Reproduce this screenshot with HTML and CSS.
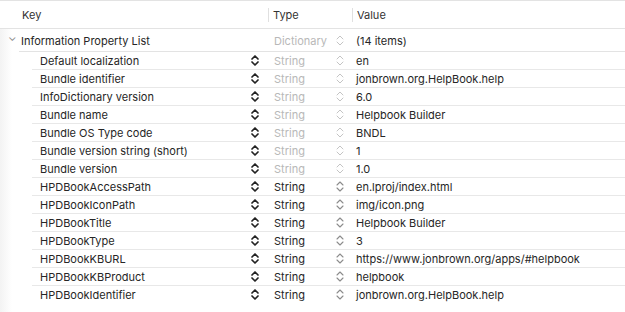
FILE: index.html
```html
<!DOCTYPE html>
<html lang="en">
  <head>
    <meta charset="UTF-8"/>
    <title>Info.plist</title>
    <link rel="stylesheet" href="styles.css">
  </head>
  <body>
    <svg width="0" height="0" class="defs">
      <symbol id="step" viewBox="0 0 8 11">
        <path d="M1 4 L4 1 L7 4 M1 7 L4 10 L7 7" fill="none" stroke-linecap="round" stroke-linejoin="round"/>
      </symbol>
    </svg>

    <div class="plist">
      <div class="head">
        <div class="col key">Key</div>
        <div class="col type"><span class="sep"></span>Type</div>
        <div class="col value"><span class="sep"></span>Value</div>
      </div>

      <div class="root">
        <div class="col key"><span class="twisty">&#x2304;</span>Information Property List</div>
        <div class="col type dim">Dictionary<svg class="st light"><use href="#step"/></svg></div>
        <div class="col value">(14 items)</div>
      </div>

      <div class="rows">
        <div class="row">
          <div class="col key">Default localization<svg class="st dark"><use href="#step"/></svg></div>
          <div class="col type dim">String<svg class="st light"><use href="#step"/></svg></div>
          <div class="col value">en</div>
        </div>
        <div class="row">
          <div class="col key">Bundle identifier<svg class="st dark"><use href="#step"/></svg></div>
          <div class="col type dim">String<svg class="st light"><use href="#step"/></svg></div>
          <div class="col value">jonbrown.org.HelpBook.help</div>
        </div>
        <div class="row">
          <div class="col key">InfoDictionary version<svg class="st dark"><use href="#step"/></svg></div>
          <div class="col type dim">String<svg class="st light"><use href="#step"/></svg></div>
          <div class="col value">6.0</div>
        </div>
        <div class="row">
          <div class="col key">Bundle name<svg class="st dark"><use href="#step"/></svg></div>
          <div class="col type dim">String<svg class="st light"><use href="#step"/></svg></div>
          <div class="col value">Helpbook Builder</div>
        </div>
        <div class="row">
          <div class="col key">Bundle OS Type code<svg class="st dark"><use href="#step"/></svg></div>
          <div class="col type dim">String<svg class="st light"><use href="#step"/></svg></div>
          <div class="col value">BNDL</div>
        </div>
        <div class="row">
          <div class="col key">Bundle version string (short)<svg class="st dark"><use href="#step"/></svg></div>
          <div class="col type dim">String<svg class="st light"><use href="#step"/></svg></div>
          <div class="col value">1</div>
        </div>
        <div class="row">
          <div class="col key">Bundle version<svg class="st dark"><use href="#step"/></svg></div>
          <div class="col type dim">String<svg class="st light"><use href="#step"/></svg></div>
          <div class="col value">1.0</div>
        </div>
        <div class="row">
          <div class="col key">HPDBookAccessPath<svg class="st dark"><use href="#step"/></svg></div>
          <div class="col type">String<svg class="st mid"><use href="#step"/></svg></div>
          <div class="col value">en.lproj/index.html</div>
        </div>
        <div class="row">
          <div class="col key">HPDBookIconPath<svg class="st dark"><use href="#step"/></svg></div>
          <div class="col type">String<svg class="st mid"><use href="#step"/></svg></div>
          <div class="col value">img/icon.png</div>
        </div>
        <div class="row">
          <div class="col key">HPDBookTitle<svg class="st dark"><use href="#step"/></svg></div>
          <div class="col type">String<svg class="st mid"><use href="#step"/></svg></div>
          <div class="col value">Helpbook Builder</div>
        </div>
        <div class="row">
          <div class="col key">HPDBookType<svg class="st dark"><use href="#step"/></svg></div>
          <div class="col type">String<svg class="st mid"><use href="#step"/></svg></div>
          <div class="col value">3</div>
        </div>
        <div class="row">
          <div class="col key">HPDBookKBURL<svg class="st dark"><use href="#step"/></svg></div>
          <div class="col type">String<svg class="st mid"><use href="#step"/></svg></div>
          <div class="col value">https://www.jonbrown.org/apps/#helpbook</div>
        </div>
        <div class="row">
          <div class="col key">HPDBookKBProduct<svg class="st dark"><use href="#step"/></svg></div>
          <div class="col type">String<svg class="st mid"><use href="#step"/></svg></div>
          <div class="col value">helpbook</div>
        </div>
        <div class="row">
          <div class="col key">HPDBookIdentifier<svg class="st dark"><use href="#step"/></svg></div>
          <div class="col type">String<svg class="st mid"><use href="#step"/></svg></div>
          <div class="col value">jonbrown.org.HelpBook.help</div>
        </div>
      </div>
    </div>
  </body>
</html>
```

FILE: styles.css
```css
body { margin: 0; background: #fff; color: #262626;
  font-family: "Inter", "Liberation Sans", sans-serif; font-size: 11px }
.defs { position: absolute }

.plist { height: 312px; overflow: hidden;
  background: linear-gradient(to right, #f3f3f3 0, #fbfbfb 8px, #fff 12px) }

.head, .root, .row { display: grid; grid-template-columns: 268px 84px 1fr }
.col { display: flex; align-items: center; white-space: nowrap; position: relative }

.head { height: 27px; border-top: 1px solid #e3e3e3; border-bottom: 1px solid #e3e3e3;
  background: #fff; color: #333 }
.head .key { padding-left: 22px }
.head .type, .head .value { padding-left: 5px }
.sep { position: absolute; left: 0; top: 7px; height: 14px; width: 1px; background: #e0e0e0 }

.root { margin-left: 19px; border-bottom: 1px solid #e3e3e3;
  grid-template-columns: 249px 84px 1fr; padding-top: 2px; box-sizing: border-box; height: 23px }
.root .key { padding-left: 2px }
.twisty { width: 13px; margin-left: -13px; color: #8a8a8a; font-size: 11px;
  position: relative; top: -4px }

.row { margin-left: 32px; height: 18px; box-sizing: border-box;
  border-bottom: 1px solid #e8e8e8; grid-template-columns: 236px 84px 1fr }
.row:last-child { border-bottom: none }
.row .key { padding-left: 8px }

.type { padding-left: 6px }
.value { padding-left: 4px }
.dim { color: #b8b8b8 }

.st { position: absolute; width: 8px; height: 11px; top: 50%; margin-top: -6px }
.key .st { right: 9px }
.type .st { right: 8px }
.st.dark { stroke: #222; stroke-width: 1.7 }
.st.mid { stroke: #8c8c8c; stroke-width: 1.1 }
.st.light { stroke: #c4c4c4; stroke-width: 1 }
```
